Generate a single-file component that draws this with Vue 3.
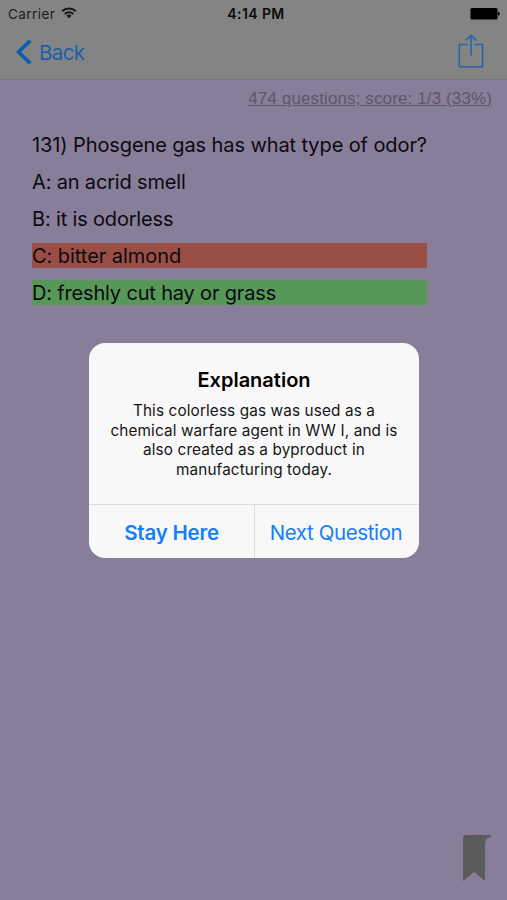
<script setup>
import { ref } from 'vue'

const question = '131) Phosgene gas has what type of odor?'

const answers = ref([
  { id: 'A', text: 'an acrid smell', state: '' },
  { id: 'B', text: 'it is odorless', state: '' },
  { id: 'C', text: 'bitter almond', state: 'wrong' },
  { id: 'D', text: 'freshly cut hay or grass', state: 'right' },
])

const explanation = [
  'This colorless gas was used as a',
  'chemical warfare agent in WW I, and is',
  'also created as a byproduct in',
  'manufacturing today.',
]
</script>

<template>
  <div class="screen">
    <header class="top">
      <div class="status">
        <div class="carrier">
          <span class="carrier-name">Carrier</span>
          <svg class="wifi" width="16" height="12" viewBox="0 0 16 12">
            <path d="M1.2 4.2A10 10 0 0 1 14.8 4.2" />
            <path d="M3.7 7A6.3 6.3 0 0 1 12.3 7" />
            <path class="solid" d="M8 11.2 5.5 8.7A3.6 3.6 0 0 1 10.5 8.7Z" />
          </svg>
        </div>
        <span class="time">4:14 PM</span>
        <svg class="battery" width="30" height="12" viewBox="0 0 30 12">
          <rect x="0.5" y="0" width="27" height="11.5" rx="1.5" />
          <path d="M28 3.8Q29.8 4.2 29.8 5.8T28 7.8Z" />
        </svg>
      </div>
      <nav class="nav">
        <a class="back">
          <svg width="16" height="26" viewBox="0 0 16 26">
            <path d="M14.2 1.6 2.6 13 14.2 24.4" />
          </svg>
          <span class="back-label">Back</span>
        </a>
        <svg class="share" width="26" height="35" viewBox="0 0 26 35">
          <path d="M9.7 10.4H1.3V32.7H24.6V10.4H16.3" />
          <path d="M13 21.5V1.2M7.8 6.4 13 1.2 18.2 6.4" />
        </svg>
      </nav>
    </header>

    <main class="content">
      <div class="score"><span>474 questions; score: 1/3 (33%)</span></div>
      <div class="quiz">
        <div class="row"><span class="question">{{ question }}</span></div>
        <div v-for="a in answers" :key="a.id" class="row" :class="a.state">
          <span class="answer">{{ a.id }}: {{ a.text }}</span>
        </div>
      </div>
    </main>

    <svg class="bookmark" width="29" height="48" viewBox="0 0 29 48">
      <path d="M0 47V4Q0 1 3.5 1H27.5Q28.5 1 28 2.2L26.5 3.4Q22 4 22 10V47L11 38Z" />
    </svg>

    <div class="alert">
      <div class="alert-body">
        <h1 class="alert-title">Explanation</h1>
        <p v-for="(line, i) in explanation" :key="i" class="line">{{ line }}</p>
      </div>
      <div class="actions">
        <button class="action strong"><span>Stay Here</span></button>
        <button class="action"><span>Next Question</span></button>
      </div>
    </div>
  </div>
</template>

<style>
body {
  margin: 0;
}
</style>

<style scoped>
.screen {
  position: relative;
  width: 507px;
  height: 900px;
  overflow: hidden;
  background: #897e9a;
  color: #0c0910;
  font-family: Inter, Roboto, sans-serif;
  white-space: nowrap;
}
.top {
  box-sizing: border-box;
  height: 80px;
  background: #848484;
  border-bottom: 1px solid #7d7983;
}

/* Status bar */
.status {
  display: grid;
  grid-template-columns: 1fr auto 1fr;
  align-items: center;
  height: 27px;
  padding: 0 7px 0 8px;
  font-size: 13.5px;
}
.carrier {
  display: flex;
  align-items: center;
  gap: 6px;
  color: #1c1c1c;
}
.carrier-name {
  letter-spacing: 0.42px;
}
.wifi {
  margin-top: -2px;
  fill: none;
  stroke: #161616;
  stroke-width: 2;
}
.wifi .solid {
  fill: #161616;
  stroke: none;
}
.time {
  padding-left: 4px;
  color: #0c0c0c;
  font-size: 14px;
  font-weight: 600;
  letter-spacing: 0.4px;
}
.battery {
  justify-self: end;
  fill: #000;
}

/* Navigation bar */
.nav {
  display: flex;
  justify-content: space-between;
  height: 52px;
  padding: 0 23px 0 16px;
}
.back {
  display: flex;
  align-items: center;
  height: 50px;
  gap: 7px;
  color: #1a5fac;
  font-size: 20.5px;
  letter-spacing: -0.6px;
}
.back svg {
  fill: none;
  stroke: #0c5cb2;
  stroke-width: 3.6;
}
.share {
  margin-top: 7px;
  fill: none;
  stroke: #2564a6;
  stroke-width: 1.5;
}

/* Question and answers */
.score {
  display: flex;
  justify-content: flex-end;
  padding: 9px 15px 0 0;
  font-family: "Liberation Sans", Arial, sans-serif;
  font-size: 17px;
  line-height: 20px;
  letter-spacing: 0.12px;
  color: #5d5669;
  text-decoration: underline;
}
.quiz {
  display: flex;
  flex-direction: column;
  gap: 12px;
  width: 395px;
  margin: 23px 0 0 32px;
  font-size: 20px;
}
.row {
  height: 25px;
  line-height: 27px;
}
.question {
  letter-spacing: -0.1px;
}
.answer {
  letter-spacing: -0.17px;
}
.row.wrong {
  background: #994f46;
}
.row.wrong .answer {
  letter-spacing: -0.05px;
}
.row.right {
  background: #579858;
}
.bookmark {
  position: absolute;
  left: 463px;
  top: 834px;
  fill: #5b5b5b;
}

/* Alert dialog */
.alert {
  position: absolute;
  left: 89px;
  top: 343px;
  display: flex;
  flex-direction: column;
  width: 330px;
  height: 215px;
  overflow: hidden;
  border-radius: 16px;
  background: #f8f8f8;
  color: #000;
  text-align: center;
}
.alert-body {
  flex: 1;
  padding-top: 24px;
}
.alert-title {
  margin: 0 0 8px;
  font-size: 20px;
  font-weight: 600;
  line-height: 26px;
}
.line {
  margin: 0;
  font-size: 15.3px;
  line-height: 19.5px;
  letter-spacing: 0.13px;
  color: #151515;
}
.actions {
  display: flex;
  height: 53px;
  border-top: 1px solid #dbdbdd;
}
.action {
  flex: 0 0 164px;
  padding: 2px 2px 0 0;
  border: 0;
  background: none;
  color: #147efb;
  font-family: inherit;
  font-size: 20.5px;
  letter-spacing: -0.38px;
}
.action.strong {
  flex-basis: 166px;
  padding-right: 0;
  border-right: 1px solid #dbdbdd;
  font-weight: 600;
  letter-spacing: -0.2px;
}
</style>
